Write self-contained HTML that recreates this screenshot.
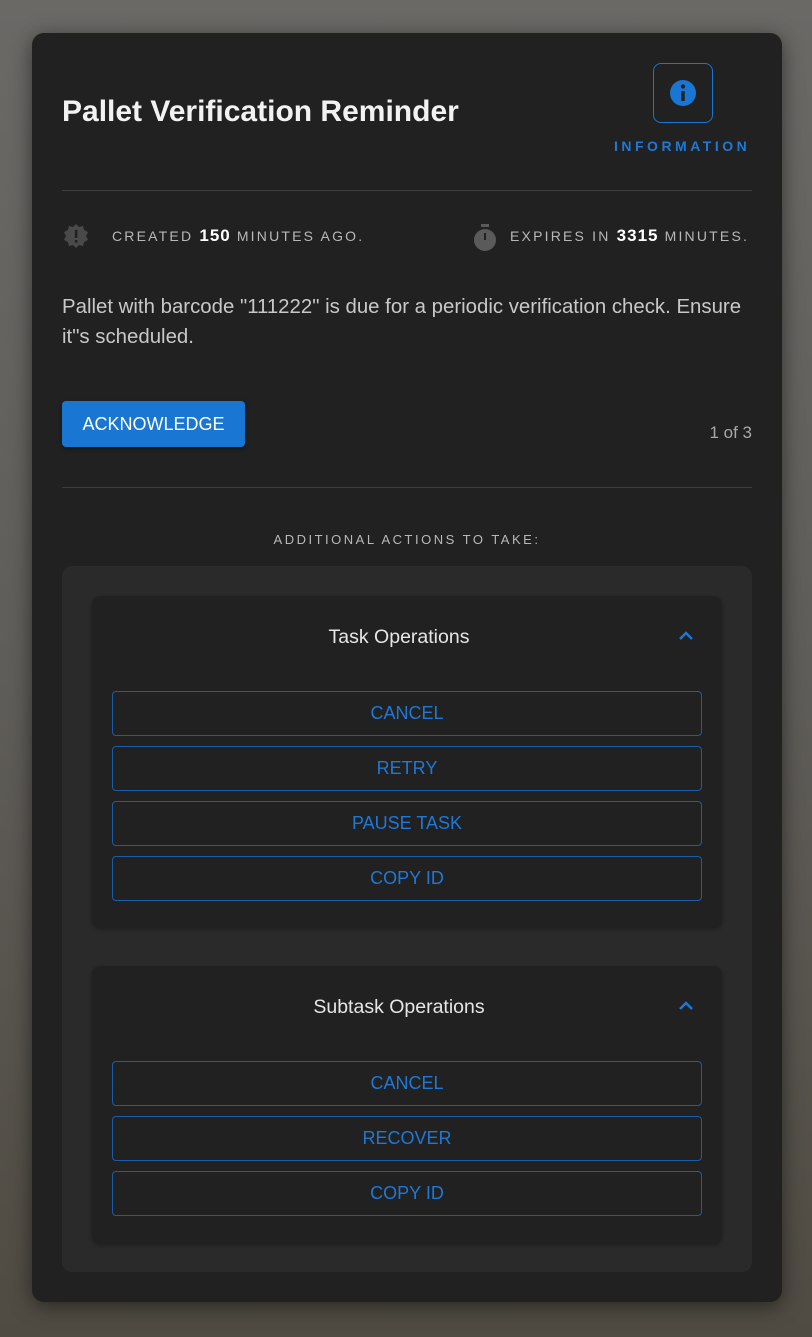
<!DOCTYPE html>
<html><head><meta charset="utf-8"><style>
*{box-sizing:border-box;margin:0;padding:0}
body{width:812px;height:1337px;overflow:hidden;font-family:"Liberation Sans",sans-serif;background:linear-gradient(180deg,#6b6966 0%,#5f5d59 50%,#4f4b42 100%);position:relative}
.card{position:absolute;left:32px;top:33px;width:750px;height:1269px;background:#212121;border-radius:12px;box-shadow:0 4px 20px rgba(0,0,0,.5)}
.abs{position:absolute}
.title{left:30px;top:62px;font-size:30px;font-weight:bold;color:#f2f2f2}
.ibox{left:621px;top:30px;width:60px;height:60px;border:1px solid #1976d2;border-radius:8px}
.info{left:582px;top:105px;font-size:14px;letter-spacing:3.5px;color:#1f78d6;font-weight:bold}
.hr{left:30px;width:690px;height:1px;background:#3c3c3c}
.meta{font-size:14px;letter-spacing:2.2px;color:#b8b8b8}
.meta b{font-size:17px;color:#fff;letter-spacing:1px}
.body{left:30px;top:259px;width:700px;font-size:20.4px;line-height:30px;color:#c8c8c8}
.ack{left:30px;top:368px;width:183px;height:46px;background:#1976d2;border-radius:4px;color:#fff;font-size:18px;text-align:center;line-height:46px;box-shadow:0 2px 4px rgba(0,0,0,.4)}
.outer{left:30px;top:533px;width:690px;height:706px;background:#2a2a2a;border-radius:10px}
.inner{position:absolute;left:30px;width:630px;background:#212121;border-radius:8px;box-shadow:0 2px 4px rgba(0,0,0,.3)}
.ih{height:80px;line-height:82px;text-align:center;font-size:19.5px;color:#e6e6e6;position:relative;padding-right:16px}
.ih svg{position:absolute;right:28px;top:34px}
.btn{margin:0 20px 10px;height:45px;border:1px solid #1a5ca8;border-radius:4px;text-align:center;line-height:43px;color:#1f78d6;font-size:18px}
</style></head><body>
<div class="card">
<div class="abs title">Pallet Verification Reminder</div>
<div class="abs ibox"><svg width="58" height="58" viewBox="0 0 58 58" style="position:absolute;left:0;top:0"><circle cx="29" cy="29" r="13" fill="#1976d2"/><rect x="27.3" y="27" width="3.4" height="10" fill="#212121"/><circle cx="29" cy="22.5" r="2.1" fill="#212121"/></svg></div>
<div class="abs info">INFORMATION</div>
<div class="abs hr" style="top:157px"></div>
<svg class="abs" style="left:30px;top:190px" width="28" height="28" viewBox="0 0 28 28"><polygon points="14,1 17,4 21,3 22,7 26,9 24,13 26,17 22,19 21,23 17,22 14,25 11,22 7,23 6,19 2,17 4,13 2,9 6,7 7,3 11,4" fill="#4a4a4a"/><rect x="12.8" y="7" width="2.6" height="8" fill="#212121"/><rect x="12.8" y="17" width="2.6" height="2.6" fill="#212121"/></svg>
<div class="abs meta" style="left:80px;top:193px">CREATED <b>150</b> MINUTES AGO.</div>
<svg class="abs" style="left:440px;top:190px" width="26" height="30" viewBox="0 0 26 30"><rect x="9" y="1" width="8" height="3" fill="#5a5a5a"/><circle cx="13" cy="17" r="11" fill="#5a5a5a"/><rect x="12" y="10" width="2" height="7" fill="#212121"/></svg>
<div class="abs meta" style="left:478px;top:193px">EXPIRES IN <b>3315</b> MINUTES.</div>
<div class="abs body">Pallet with barcode "111222" is due for a periodic verification check. Ensure it"s scheduled.</div>
<div class="abs ack">ACKNOWLEDGE</div>
<div class="abs" style="right:30px;top:390px;font-size:17px;color:#a8a8a8">1 of 3</div>
<div class="abs hr" style="top:454px"></div>
<div class="abs" style="left:0;width:750px;top:499px;text-align:center;font-size:13px;letter-spacing:2.5px;color:#b8b8b8">ADDITIONAL ACTIONS TO TAKE:</div>
<div class="abs outer">
<div class="inner" style="top:30px;height:331px">
<div class="ih">Task Operations<svg width="16" height="12" viewBox="0 0 16 12"><path d="M2 9 L8 3 L14 9" stroke="#1f78d6" stroke-width="2.4" fill="none"/></svg></div>
<div style="height:15px"></div>
<div class="btn">CANCEL</div><div class="btn">RETRY</div><div class="btn">PAUSE TASK</div><div class="btn">COPY ID</div>
</div>
<div class="inner" style="top:400px;height:277px">
<div class="ih">Subtask Operations<svg width="16" height="12" viewBox="0 0 16 12"><path d="M2 9 L8 3 L14 9" stroke="#1f78d6" stroke-width="2.4" fill="none"/></svg></div>
<div style="height:15px"></div>
<div class="btn">CANCEL</div><div class="btn">RECOVER</div><div class="btn">COPY ID</div>
</div>
</div>
</div>
</body></html>
